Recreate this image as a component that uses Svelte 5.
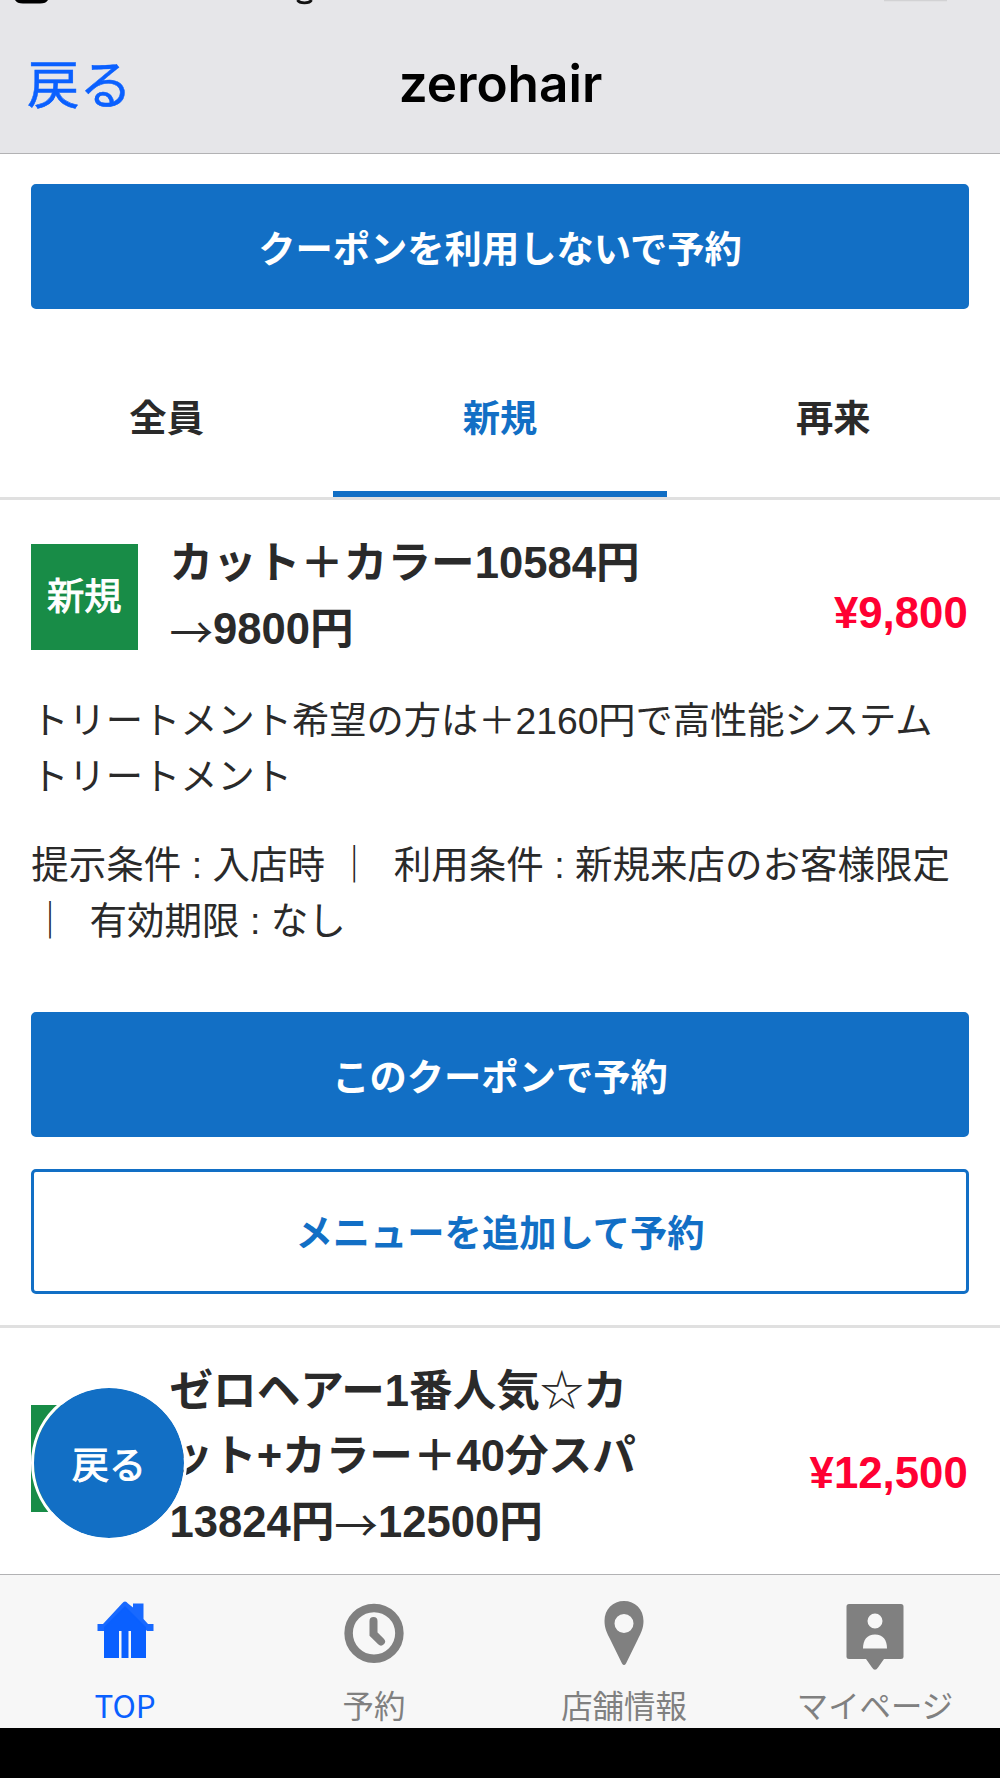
<script>
  const tabs = ['全員', '新規', '再来'];
  const active = '新規';
</script>

<div class="screen">
  <header>
    <div class="status" aria-hidden="true">
      <svg width="1000" height="6" viewBox="0 0 1000 6">
        <path d="M15 0H48Q46 3.500 40 3.500H23Q17 3.500 15 0Z" fill="#000" />
        <path d="M297.500 0Q299 2.800 304.500 2.800Q310 2.800 311.500 0" fill="none" stroke="#111" stroke-width="2.800" />
        <path d="M884 .5H947" stroke="#d2d2d4" stroke-width="1.400" />
      </svg>
    </div>
    <div class="nav">
      <a class="back">戻る</a>
      <h1>zerohair</h1>
      <span></span>
    </div>
  </header>

  <main>
    <div class="lead"><button class="btn">クーポンを利用しないで予約</button></div>
    <div class="tabs">
      {#each tabs as tab}
        <div class="tab" class:active={tab === active}>{tab}</div>
      {/each}
    </div>

    <section class="coupon">
      <div class="head">
        <div class="badge">新規</div>
        <h2>カット＋カラー10584円<br /><i class="arrow">→</i>9800円</h2>
        <strong class="price">¥9,800</strong>
      </div>
      <p class="desc">トリートメント希望の方は＋2160円で高性能システム<br />トリートメント</p>
      <p class="cond">提示条件 : 入店時 ｜&nbsp; 利用条件 : 新規来店のお客様限定<br />｜&nbsp; 有効期限 : なし</p>
      <button class="btn">このクーポンで予約</button>
      <button class="btn outline">メニューを追加して予約</button>
    </section>

    <section class="coupon second">
      <div class="head">
        <div class="badge"></div>
        <h2>ゼロヘアー1番人気<i>☆</i>カ<br />ット+カラー＋40分スパ<br />13824円<i class="arrow">→</i>12500円</h2>
        <strong class="price">¥12,500</strong>
      </div>
    </section>
    <button class="float">戻る</button>
  </main>

  <footer>
    <div class="item on">
      <svg width="60" height="70" viewBox="0 0 60 70">
        <path d="M9 29V60H24V33H36V60H51V29L30 8Z" />
        <path d="M26.500 33H33.500V60H26.500Z" />
        <path d="M2.500 26H8L27 5.500Q30 1.500 33 5.500L38 9.500V5.500H48.500V21L53 26H58.500V33H52L30 10L9 33H2.500Z" opacity=".94" />
      </svg>
      <span>TOP</span>
    </div>
    <div class="item">
      <svg width="60" height="70" viewBox="0 0 60 70">
        <circle cx="30" cy="35.300" r="25.400" fill="none" stroke="currentColor" stroke-width="8.500" />
        <path d="M29.500 23V36L37 43.500" fill="none" stroke="currentColor" stroke-width="8" stroke-linecap="round" />
      </svg>
      <span>予約</span>
    </div>
    <div class="item">
      <svg width="60" height="70" viewBox="0 0 60 70">
        <path fill-rule="evenodd" d="M30 3C19 3 10.500 11 10.500 23C10.500 30 13 35 16 41L28 65.500Q30 68.500 32 65.500L44 41C47 35 49.500 30 49.500 23C49.500 11 41 3 30 3ZM30 16A9.500 9.500 0 1 1 30 35A9.500 9.500 0 1 1 30 16Z" />
      </svg>
      <span>店舗情報</span>
    </div>
    <div class="item">
      <svg width="60" height="74" viewBox="0 0 60 74">
        <path fill-rule="evenodd" d="M4 6H56Q58.500 6 58.500 8.500V59Q58.500 61 56 61H39L33 69.500Q30 74 27 69.500L21 61H4Q1.500 61 1.500 59V8.500Q1.500 6 4 6ZM30 15.500A7.500 7.500 0 1 0 30 30.500A7.500 7.500 0 1 0 30 15.500ZM18 50.500H42C42 42 38 36.500 30 36.500S18 42 18 50.500Z" />
      </svg>
      <span>マイページ</span>
    </div>
  </footer>
</div>

<style>
  :global(body) { margin: 0; background: #000; }
  .screen {
    width: 1000px; height: 1778px; overflow: hidden;
    display: flex; flex-direction: column;
    background: #000; color: #2a2a2a;
    font-family: "Liberation Sans", "Noto Sans CJK JP", sans-serif;
  }
  header {
    box-sizing: border-box; height: 154px; flex: none;
    background: #e6e6e9; border-bottom: 1px solid #b2b2b4;
    display: flex; flex-direction: column;
  }
  .status { height: 6px; }
  .status svg { display: block; }
  .nav {
    flex: 1; padding: 6px 26px 0 27px;
    display: grid; grid-template-columns: 1fr auto 1fr; align-items: center;
  }
  .back { color: #0a60ff; font: 400 52.5px/80px "Noto Sans CJK JP", sans-serif; -webkit-text-stroke: .5px #0a60ff; padding-bottom: 4px; }
  h1 { margin: 0; color: #000; font: 600 51.3px/80px Inter, sans-serif; padding-top: 1px; }
  main {
    position: relative; height: 1420px; flex: none; overflow: hidden;
    background: #fff;
  }
  .lead { padding: 30px 31.25px 0; }
  button { border: 0; padding: 0; font-family: inherit; cursor: pointer; }
  .btn {
    display: block; width: 100%; height: 125px; box-sizing: border-box;
    border: 3px solid #126fc5; border-radius: 5px;
    background: #126fc5; color: #fff;
    font-size: 37.3px; font-weight: 700;
  }
  .outline { background: #fff; color: #126fc5; margin-top: 31.5px; }
  .tabs {
    display: grid; grid-template-columns: repeat(3, 1fr);
    margin-top: 31px; height: 157px; border-bottom: 3px solid #e0e0e0;
  }
  .tab {
    display: flex; align-items: center; justify-content: center;
    box-sizing: border-box; border-bottom: 6.5px solid transparent;
    font-size: 37.3px; font-weight: 700;
  }
  .active { color: #126fc5; border-color: #126fc5; }
  .coupon {
    box-sizing: border-box; height: 828px; padding: 31px 31.25px 0;
    border-bottom: 3px solid #e0e0e0;
  }
  .head { display: flex; align-items: center; }
  .badge {
    width: 106.25px; height: 106.25px; flex: none; margin-right: 32px;
    display: flex; align-items: center; justify-content: center;
    box-sizing: border-box; padding-bottom: 6px;
    background: #188c47; color: #fff; font-size: 37.3px; font-weight: 400;
    -webkit-text-stroke: 1px #fff;
  }
  h2 {
    margin: 0; flex: 1; white-space: nowrap;
    font-size: 43.6px; line-height: 65.7px; font-weight: 700;
  }
  h2 i { font: 400 43.6px/1 "Noto Sans CJK JP"; }
  .arrow { position: relative; top: 5px; }
  .price { color: #ff0032; font-size: 43.75px; line-height: 60px; padding: 33px 1px 0 0; }
  p { margin: 0; font-size: 37.5px; line-height: 56.25px; white-space: nowrap; }
  .desc { padding-top: 30.5px; font-size: 37.25px; }
  .cond { padding: 31.5px 0 63px; }
  .second { border: 0; height: 247px; padding-top: 30.5px; }
  .second .badge { margin-top: 3px; }
  .second .price { padding-top: 31px; }
  .float {
    position: absolute; left: 31px; top: 1231px;
    width: 156px; height: 156px; box-sizing: border-box;
    border: 3px solid #fff; border-radius: 50%;
    background: #126fc5; background-clip: padding-box;
    color: #fff; font-size: 37px; font-weight: 400;
    -webkit-text-stroke: 1px #fff;
  }
  footer {
    flex: none; box-sizing: border-box; height: 154px;
    background: #f7f7f7; border-top: 1px solid #b2b2b4;
    display: grid; grid-template-columns: repeat(4, 1fr);
  }
  .item {
    height: 153px; padding: 23px 2px 0 0; box-sizing: border-box;
    display: flex; flex-direction: column; align-items: center;
    color: #808080;
  }
  .item:first-child, .item:last-child { padding-right: 0; }
  .item svg { height: 74px; fill: currentColor; }
  .item svg[height="70"] { height: 70px; margin-bottom: 4px; }
  .item span { font: 400 31.4px/40px "Noto Sans CJK JP", sans-serif; margin-top: 13px; white-space: nowrap; }
  .on { color: #0a60ff; }
</style>
